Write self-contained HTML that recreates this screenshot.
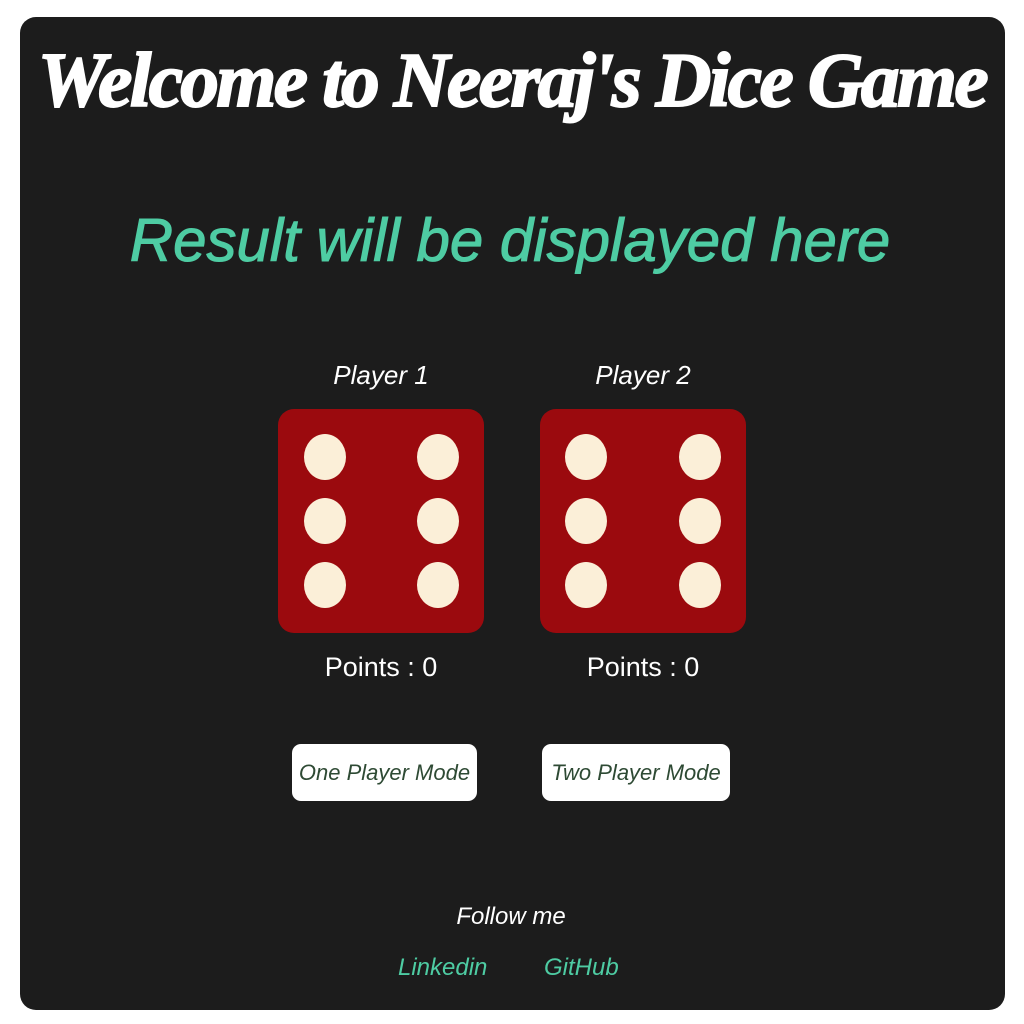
<!DOCTYPE html>
<html><head><style>
body{margin:0;width:1024px;height:1024px;background:#fff;position:relative;overflow:hidden;font-family:"Liberation Sans",sans-serif}
.card{position:absolute;left:20px;top:17px;width:985px;height:993px;background:#1c1c1c;border-radius:16px}
.t{position:absolute;white-space:nowrap;text-align:center}
.die{position:absolute;top:409px;width:206px;height:224px;background:#9b0a0e;border-radius:16px}
.dot{position:absolute;width:42px;height:46px;border-radius:50%;background:#fbefd8}
.btn{position:absolute;top:744px;height:57px;background:#fff;border-radius:9px;color:#2e4a34;font-size:22px;line-height:57px;text-align:center;font-style:italic}
</style></head><body>
<div class="card"></div>
<div class="t" style="left:12px;width:1000px;top:36px;color:#fff;font-size:77px;font-weight:bold;font-style:italic;font-family:'Liberation Serif',serif;letter-spacing:-2.5px;-webkit-text-stroke:2px #fff">Welcome to Neeraj's Dice Game</div>
<div class="t" style="left:120px;width:780px;top:206px;color:#4ecca3;font-size:60px;font-style:italic;-webkit-text-stroke:1px #4ecca3">Result will be displayed here</div>
<div class="t" style="left:278px;width:206px;top:360px;color:#fff;font-size:26px;font-style:italic">Player 1</div>
<div class="t" style="left:540px;width:206px;top:360px;color:#fff;font-size:26px;font-style:italic">Player 2</div>
<div class="die" style="left:278px">
<div class="dot" style="left:26px;top:25px"></div><div class="dot" style="left:139px;top:25px"></div>
<div class="dot" style="left:26px;top:89px"></div><div class="dot" style="left:139px;top:89px"></div>
<div class="dot" style="left:26px;top:153px"></div><div class="dot" style="left:139px;top:153px"></div>
</div>
<div class="die" style="left:540px">
<div class="dot" style="left:25px;top:25px"></div><div class="dot" style="left:139px;top:25px"></div>
<div class="dot" style="left:25px;top:89px"></div><div class="dot" style="left:139px;top:89px"></div>
<div class="dot" style="left:25px;top:153px"></div><div class="dot" style="left:139px;top:153px"></div>
</div>
<div class="t" style="left:278px;width:206px;top:652px;color:#fff;font-size:27px">Points : 0</div>
<div class="t" style="left:540px;width:206px;top:652px;color:#fff;font-size:27px">Points : 0</div>
<div class="btn" style="left:292px;width:185px">One Player Mode</div>
<div class="btn" style="left:542px;width:188px">Two Player Mode</div>
<div class="t" style="left:400px;width:222px;top:903px;color:#fff;font-size:24px;font-style:italic">Follow me</div>
<div class="t" style="left:398px;top:954px;color:#4ecca3;font-size:24px;font-style:italic">Linkedin</div>
<div class="t" style="left:544px;top:954px;color:#4ecca3;font-size:24px;font-style:italic">GitHub</div>
</body></html>
